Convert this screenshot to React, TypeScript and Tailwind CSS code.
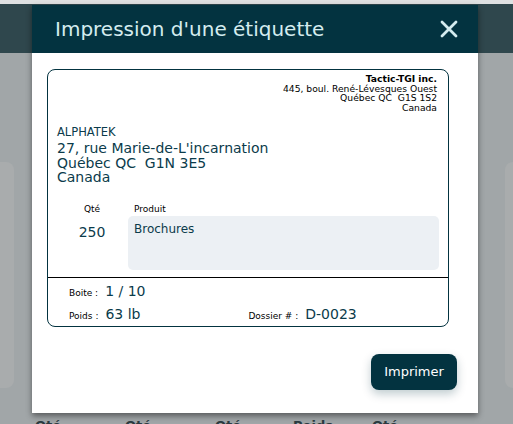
import React from "react";

const font = { fontFamily: '"DejaVu Sans", Verdana, sans-serif' };

function Background() {
  return (
    <div className="flex h-[424px] w-[513px] flex-col overflow-hidden bg-[#a1a6a8]">
      <div className="h-[4px] shrink-0 bg-[#dfe1e2]" />
      <div className="h-[49px] shrink-0 bg-[#2f474d]" />
      <div className="flex h-[366px] shrink-0 justify-between pt-[109px]">
        <div className="-ml-4 h-[226px] w-[30px] rounded-lg bg-[#a9acad]" />
        <div className="-mr-4 h-[226px] w-[24px] rounded-lg bg-[#a9acad]" />
      </div>
      <div className="flex h-[14px] shrink-0 pl-[35px] text-[13px] font-bold leading-[14px] text-[#2b3a40]">
        <span className="w-[90px]">Qté</span>
        <span className="w-[90px]">Qté</span>
        <span className="w-[78px]">Qté</span>
        <span className="w-[79px]">Poids</span>
        <span>Qté</span>
      </div>
    </div>
  );
}

function Label() {
  return (
    <div className="flex flex-col rounded-lg border border-[#033340] text-[#0b3b4b]">
      <div className="flex flex-col items-end pr-[11px] pt-[4px] text-[9.2px] leading-[9.5px] text-black">
        <span className="font-bold">Tactic-TGI inc.</span>
        <span>445, boul. René-Lévesques Ouest</span>
        <span className="whitespace-pre">Québec QC  G1S 1S2</span>
        <span>Canada</span>
      </div>
      <div className="mt-[12px] pl-[9px] text-[11.5px] leading-[17px]">ALPHATEK</div>
      <div className="flex flex-col pl-[9px] text-[14px] leading-[14.5px]">
        <span>27, rue Marie-de-L'incarnation</span>
        <span className="whitespace-pre">Québec QC  G1N 3E5</span>
        <span>Canada</span>
      </div>
      <div className="mt-[19px] flex pb-[7px] pl-[8px] pr-[9px]">
        <div className="flex w-[72px] flex-col items-center">
          <span className="text-[9px] leading-[11px] text-black">Qté</span>
          <span className="mt-[9px] text-[14px] leading-[16px]">250</span>
        </div>
        <div className="flex flex-1 flex-col">
          <span className="pl-[6px] text-[9px] leading-[11px] text-black">Produit</span>
          <div className="mt-[1px] h-[54px] rounded-[5px] bg-[#ecf0f4] px-[6px] pt-[5px] text-[12px] leading-[16px]">
            Brochures
          </div>
        </div>
      </div>
      <div className="border-t border-black pb-[1px] pl-[21px] pt-[3px]">
        <div className="flex items-baseline">
          <span className="text-[9px] text-black">Boite :</span>
          <span className="ml-[7px] text-[14px] leading-[20px]">1 / 10</span>
        </div>
        <div className="mt-[2px] flex items-baseline">
          <span className="text-[9px] text-black">Poids :</span>
          <span className="ml-[7px] w-[143px] text-[14px] leading-[22px]">63 lb</span>
          <span className="text-[9px] text-black">Dossier # :</span>
          <span className="ml-[7px] text-[14px] leading-[22px]">D-0023</span>
        </div>
      </div>
    </div>
  );
}

export default function App() {
  return (
    <div className="relative h-[424px] w-[513px] overflow-hidden" style={font}>
      <Background />
      <div className="absolute left-[32px] top-[5px] flex w-[446px] flex-col bg-white shadow-[0_3px_6px_rgba(0,0,0,0.45)]">
        <div className="flex h-[48px] items-center justify-between bg-[#033340] pl-[23px] pr-[20px]">
          <span className="text-[20px] text-[#d4ecef]">Impression d'une étiquette</span>
          <svg width="18" height="18" viewBox="0 0 18 18" className="text-[#d4ecef]">
            <path d="M2 2 L16 16 M16 2 L2 16" stroke="currentColor" strokeWidth="2.8" strokeLinecap="round" />
          </svg>
        </div>
        <div className="pl-[15px] pr-[29px] pt-[16px]">
          <Label />
        </div>
        <div className="flex justify-end px-[21px] pb-[23px] pt-[27px]">
          <button className="h-[36px] w-[86px] rounded-lg bg-[#033340] text-[13px] text-white shadow-[0_4px_10px_rgba(3,51,64,0.25)]">
            Imprimer
          </button>
        </div>
      </div>
    </div>
  );
}
